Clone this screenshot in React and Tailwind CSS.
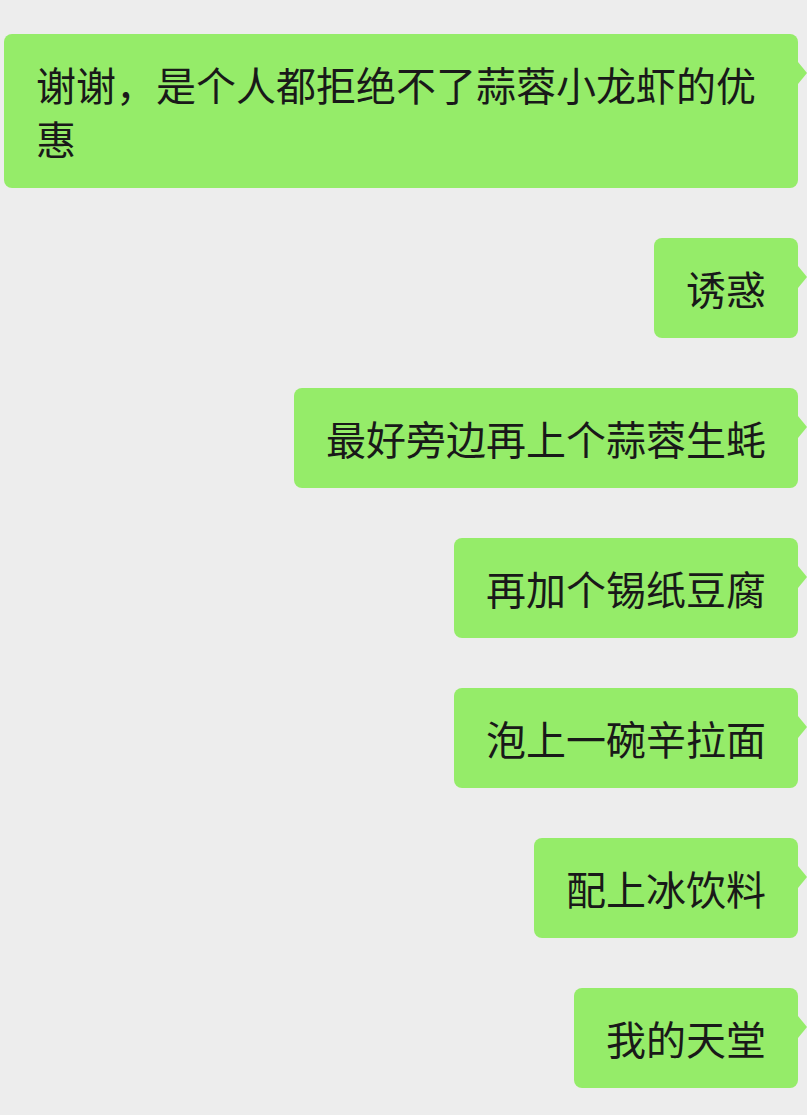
const messages = [
  "谢谢，是个人都拒绝不了蒜蓉小龙虾的优惠",
  "诱惑",
  "最好旁边再上个蒜蓉生蚝",
  "再加个锡纸豆腐",
  "泡上一碗辛拉面",
  "配上冰饮料",
  "我的天堂",
];

function Bubble({ text }) {
  return (
    <div className="relative max-w-full rounded-[8px] bg-[#95ec69] px-[32px] py-[23px] text-[40px] leading-[54px] text-[#191919]">
      {text}
      <span className="absolute left-full top-[28px] h-0 w-0 border-y-[11px] border-l-[9px] border-y-transparent border-l-[#95ec69]" />
    </div>
  );
}

export default function App() {
  return (
    <div
      className="min-h-[1115px] w-[807px] bg-[#ededed] pl-[4px] pr-[9px] pt-[34px]"
      style={{ fontFamily: '"Noto Sans CJK SC", "Noto Sans", sans-serif' }}
    >
      <div className="flex flex-col items-end gap-[50px]">
        {messages.map((m, i) => (
          <Bubble key={i} text={m} />
        ))}
      </div>
    </div>
  );
}
